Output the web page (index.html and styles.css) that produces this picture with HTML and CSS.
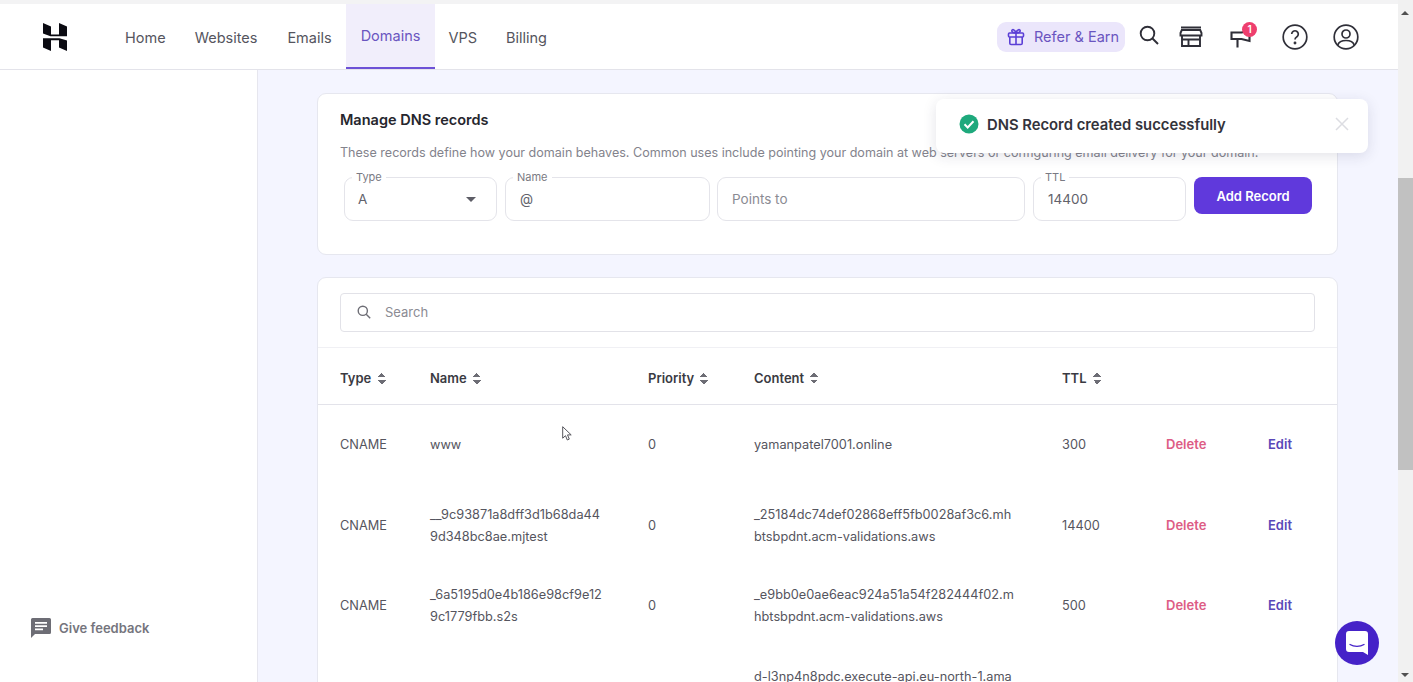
FILE: index.html
```html
<!DOCTYPE html>
<html>
    <head>
        <meta charset="utf-8">
        <title>Manage DNS records</title>
        <link rel="stylesheet" href="styles.css">
    </head>
    <body>
        <div class="app">
            <div class="top-strip"></div>
            <div class="header">
                <svg class="logo" viewBox="0 0 24 28" width="24" height="28">
                    <path d="M0 0l8 3.500v8h8V0l8 3.500v9.800H7.500L0 10.500z" fill="#0b0b12"/>
                    <path d="M0 15.200h16.500L24 17.500V28l-8-3.500v-7.300H8V28l-8-3.500z" fill="#0b0b12"/>
                </svg>
                <div class="nav">
                    <a class="home">Home</a>
                    <a class="websites">Websites</a>
                    <a>Emails</a>
                    <a class="active">Domains</a>
                    <a class="vps">VPS</a>
                    <a>Billing</a>
                </div>
                <div class="actions">
                    <div class="refer">
                        <svg viewBox="0 0 20 20" width="20" height="20" fill="none" stroke="#5b3fd6" stroke-width="1.6">
                            <rect x="2.500" y="6" width="15" height="4" rx="1"/>
                            <path d="M3.800 10v6.200a1.300 1.300 0 0 0 1.300 1.300h9.800a1.300 1.300 0 0 0 1.300-1.300V10M10 6v11.500M10 6C8 6 5.800 5.300 5.800 3.800 5.800 2 8.800 1.800 10 6zM10 6c2 0 4.200-.7 4.200-2.200C14.200 2 11.200 1.800 10 6z"/>
                        </svg>
                        <span>Refer &amp; Earn</span>
                    </div>
                    <svg class="ic-search" viewBox="0 0 20 20" width="20" height="20" fill="none" stroke="#2f2f38" stroke-width="1.9">
                        <circle cx="8.500" cy="8.500" r="6.800"/>
                        <path d="M13.500 13.500l5.500 5.500"/>
                    </svg>
                    <svg class="ic-store" viewBox="0 0 24 21" width="24" height="21" fill="none" stroke="#2f2f38" stroke-width="1.9">
                        <path d="M2 1.500h20M1.500 7l1.300-3h18.400l1.300 3v2.500h-21zM3 9.500V20h18V9.500M9.500 20v-6.500h-6.500M9.500 13.500h11.500"/>
                    </svg>
                    <div class="ic-news">
                        <svg viewBox="0 0 24 18" width="24" height="18" fill="none" stroke="#2f2f38" stroke-width="2.1">
                            <path d="M1.500 2.500h10l8-1.500v10l-8-2h-10zM7.500 9v8.500"/>
                        </svg>
                        <span class="badge">1</span>
                    </div>
                    <svg class="ic-help" viewBox="0 0 26 26" width="26" height="26" fill="none" stroke="#2f2f38" stroke-width="1.7">
                        <circle cx="13" cy="13" r="11.800"/>
                        <path d="M9.700 10a3.300 3.300 0 1 1 5 2.900c-1.100.7-1.700 1.300-1.700 2.600"/>
                        <circle cx="13" cy="19" r=".6" fill="#2f2f38"/>
                    </svg>
                    <svg class="ic-user" viewBox="0 0 26 26" width="26" height="26" fill="none" stroke="#2f2f38" stroke-width="1.7">
                        <circle cx="13" cy="13" r="11.800"/>
                        <circle cx="13" cy="10" r="4"/>
                        <path d="M4.800 21c1-3.200 4-4.500 8.200-4.500s7.200 1.300 8.200 4.500"/>
                    </svg>
                </div>
            </div>
            <div class="below">
                <div class="sidebar">
                    <div class="feedback">
                        <svg viewBox="0 0 20 20" width="20" height="20">
                            <path d="M1.500 0h17A1.500 1.500 0 0 1 20 1.500v13a1.500 1.500 0 0 1-1.500 1.500H4l-4 4V1.500A1.500 1.500 0 0 1 1.500 0z" fill="#6d6d75"/>
                            <path d="M4 4h12v1.800H4zM4 7.200h12V9H4zM4 10.400h8v1.800H4z" fill="#fff"/>
                        </svg>
                        <span>Give feedback</span>
                    </div>
                </div>
                <div class="main">
                    <div class="card card-dns">
                        <h2>Manage DNS records</h2>
                        <p>These records define how your domain behaves. Common uses include pointing your domain at web servers or configuring email delivery for your domain.</p>
                        <div class="form">
                            <div class="field f-type">
                                <label>Type</label>
                                <span class="val">A</span>
                                <span class="caret"></span>
                            </div>
                            <div class="field f-name">
                                <label>Name</label>
                                <span class="val">@</span>
                            </div>
                            <div class="field f-points">
                                <span class="ph">Points to</span>
                            </div>
                            <div class="field f-ttl">
                                <label>TTL</label>
                                <span class="val">14400</span>
                            </div>
                            <button class="add-btn">Add Record</button>
                        </div>
                    </div>
                    <div class="card card-table">
                        <div class="search-wrap">
                            <div class="search">
                                <svg viewBox="0 0 14 14" width="14" height="14" fill="none" stroke="#6d6d75" stroke-width="1.4">
                                    <circle cx="5.800" cy="5.800" r="4.600"/>
                                    <path d="M9.200 9.200l4 4"/>
                                </svg>
                                <span>Search</span>
                            </div>
                        </div>
                        <table>
                            <colgroup>
                                <col class="c1"><col class="c2"><col class="c3"><col class="c4"><col class="c5"><col class="c6"><col>
                            </colgroup>
                            <thead>
                                <tr>
                                    <th>Type <i class="sort"></i></th>
                                    <th>Name <i class="sort"></i></th>
                                    <th>Priority <i class="sort"></i></th>
                                    <th>Content <i class="sort"></i></th>
                                    <th>TTL <i class="sort"></i></th>
                                    <th></th>
                                    <th></th>
                                </tr>
                            </thead>
                            <tbody>
                                <tr class="r1">
                                    <td>CNAME</td>
                                    <td>www</td>
                                    <td>0</td>
                                    <td>yamanpatel7001.online</td>
                                    <td>300</td>
                                    <td class="del">Delete</td>
                                    <td class="edit">Edit</td>
                                </tr>
                                <tr>
                                    <td>CNAME</td>
                                    <td>__9c93871a8dff3d1b68da44<br>9d348bc8ae.mjtest</td>
                                    <td>0</td>
                                    <td>_25184dc74def02868eff5fb0028af3c6.mh<br>btsbpdnt.acm-validations.aws</td>
                                    <td>14400</td>
                                    <td class="del">Delete</td>
                                    <td class="edit">Edit</td>
                                </tr>
                                <tr>
                                    <td>CNAME</td>
                                    <td>_6a5195d0e4b186e98cf9e12<br>9c1779fbb.s2s</td>
                                    <td>0</td>
                                    <td>_e9bb0e0ae6eac924a51a54f282444f02.m<br>hbtsbpdnt.acm-validations.aws</td>
                                    <td>500</td>
                                    <td class="del">Delete</td>
                                    <td class="edit">Edit</td>
                                </tr>
                                <tr class="r4">
                                    <td></td>
                                    <td></td>
                                    <td></td>
                                    <td>d-l3np4n8pdc.execute-api.eu-north-1.ama</td>
                                    <td></td>
                                    <td></td>
                                    <td></td>
                                </tr>
                            </tbody>
                        </table>
                    </div>
                </div>
            </div>
        </div>
        <div class="scrollbar">
            <span class="arrow-up"></span>
            <div class="thumb"></div>
            <span class="arrow-down"></span>
        </div>

        <div class="toast">
            <svg viewBox="0 0 20 20" width="20" height="20">
                <circle cx="10" cy="10" r="9.500" fill="#1ea97c"/>
                <path d="M5.500 10.300l3.200 3.200 5.800-6.200" fill="none" stroke="#fff" stroke-width="2"/>
            </svg>
            <span class="toast-text">DNS Record created successfully</span>
            <svg class="toast-x" viewBox="0 0 14 14" width="14" height="14" fill="none" stroke="#dcdde2" stroke-width="1.5">
                <path d="M1 1l12 12M13 1L1 13"/>
            </svg>
        </div>

        <div class="chat">
            <svg viewBox="0 0 22 24" width="22" height="24">
                <path d="M3 0h16a3 3 0 0 1 3 3v21l-5-3H3a3 3 0 0 1-3-3V3a3 3 0 0 1 3-3z" fill="#fff"/>
                <path d="M4 13.500c4 2.500 10 2.500 14 0" fill="none" stroke="#4522c8" stroke-width="1.4" stroke-linecap="round"/>
            </svg>
        </div>

        <svg class="cursor" viewBox="0 0 10 15" width="10" height="15">
            <path d="M.7.7v11.500l2.800-2.500 1.800 4.300 2-.9-1.800-4.200h3.700z" fill="#fff" stroke="#55555c" stroke-width="1"/>
        </svg>
    </body>
</html>
```

FILE: styles.css
```css
html, body {
    margin: 0;
    padding: 0;
    height: 682px;
    overflow: hidden;
}
body {
    display: flex;
    font-family: "Inter", "Liberation Sans", sans-serif;
    color: #4b4b55;
    background: #f4f5ff;
}
.app {
    flex: 1;
    min-width: 0;
    display: flex;
    flex-direction: column;
}
.top-strip {
    height: 4px;
    background: #f3f3f4;
}

/* header */
.header {
    height: 65px;
    flex: none;
    display: flex;
    align-items: center;
    background: #fff;
    box-shadow: 0 1px 0 #e3e3ea;
    position: relative;
    z-index: 1;
}
.logo {
    margin-left: 43px;
    flex: none;
}
.nav {
    display: flex;
    align-items: stretch;
    align-self: stretch;
    margin-left: 39px;
}
.nav a {
    display: flex;
    align-items: center;
    padding: 1px 14.5px 0;
    font-size: 14.5px;
    color: #55555e;
}
.nav a.home {
    padding-left: 19px;
}
.nav a.websites {
    padding-right: 15.5px;
}
.nav a.vps {
    padding-left: 13.5px;
}
.nav a.active {
    color: #6a55c0;
    background: #f1eefb;
    border-bottom: 2px solid #6d51d6;
    box-sizing: border-box;
    padding-top: 0;
    padding-bottom: 1px;
}
.actions {
    margin-left: auto;
    display: flex;
    align-items: center;
    margin-right: 39px;
}
.refer {
    display: flex;
    align-items: center;
    gap: 8px;
    height: 30px;
    width: 128px;
    box-sizing: border-box;
    padding-left: 9px;
    background: #ebe6fb;
    border-radius: 9px;
    color: #6a55c0;
    font-size: 14.5px;
}
.ic-search {
    margin-left: 14px;
    margin-top: -3px;
}
.ic-store {
    margin-left: 20px;
}
.ic-news {
    margin-left: 27px;
    margin-top: 4px;
    position: relative;
    display: flex;
}
.badge {
    position: absolute;
    top: -8px;
    left: 12px;
    width: 15px;
    height: 15px;
    border-radius: 50%;
    background: #ee3f6e;
    color: #fff;
    font-size: 10px;
    font-weight: 600;
    line-height: 15px;
    text-align: center;
}
.ic-help {
    margin-left: 28px;
}
.ic-user {
    margin-left: 25px;
}

/* below header */
.below {
    flex: 1;
    min-height: 0;
    display: flex;
}
.sidebar {
    width: 258px;
    flex: none;
    box-sizing: border-box;
    background: #fff;
    border-right: 1px solid #e6e6ee;
    display: flex;
    flex-direction: column;
    justify-content: flex-end;
    padding: 0 0 44px 31px;
}
.feedback {
    display: flex;
    align-items: center;
    gap: 8px;
    font-size: 13px;
    font-weight: 600;
    color: #75757d;
}
.main {
    flex: 1;
    min-width: 0;
    padding: 24px 60px 0 59px;
    overflow: hidden;
}
.card {
    background: #fff;
    border: 1px solid #e6e7ef;
    border-radius: 9px;
    box-sizing: border-box;
}

/* dns form */
.card-dns {
    height: 162px;
    padding: 16px 22px 0;
}
.card-dns h2 {
    margin: 0;
    font-size: 14.5px;
    line-height: 20px;
    font-weight: 600;
    color: #26262e;
}
.card-dns p {
    margin: 14px 0 0;
    font-size: 12.55px;
    line-height: 18px;
    color: #83838c;
    white-space: nowrap;
}
.form {
    display: flex;
    align-items: flex-start;
    gap: 7px;
    margin: 15px 0 0 4px;
}
.field {
    height: 44px;
    box-sizing: border-box;
    border: 1px solid #e4e4ea;
    border-radius: 9px;
    position: relative;
    display: flex;
    align-items: center;
    padding-left: 14px;
    font-size: 13.5px;
    flex: none;
}
.field label {
    position: absolute;
    top: -8px;
    left: 7px;
    padding: 0 4px;
    background: #fff;
    font-size: 11px;
    line-height: 14px;
    color: #7a7a83;
}
.field .val {
    color: #62626b;
}
.field .ph {
    color: #8b8b93;
}
.f-type { width: 153px; padding-left: 13px; }
.f-name { width: 205px; margin-left: 1px; }
.f-points { width: 308px; }
.f-ttl { width: 153px; margin-left: 1px; }
.caret {
    position: absolute;
    right: 20px;
    top: 19px;
    border-left: 5px solid transparent;
    border-right: 5px solid transparent;
    border-top: 5px solid #5d5d66;
}
.add-btn {
    width: 118px;
    height: 37px;
    margin-left: 1px;
    border: 0;
    border-radius: 8px;
    background: #6039dc;
    color: #fff;
    font-family: inherit;
    font-size: 13px;
    font-weight: 600;
}

/* records table */
.card-table {
    margin-top: 22px;
}
.search-wrap {
    height: 70px;
    box-sizing: border-box;
    padding: 15px 22px 0;
    border-bottom: 1px solid #f0f0f4;
}
.search {
    height: 39px;
    box-sizing: border-box;
    border: 1px solid #e2e2e8;
    border-radius: 4px;
    display: flex;
    align-items: center;
    padding: 0 0 1px 16px;
    gap: 14px;
    font-size: 13px;
    color: #8b8b93;
}
table {
    width: 100%;
    table-layout: fixed;
    border-collapse: collapse;
}
.c1 { width: 112px; }
.c2 { width: 218px; }
.c3 { width: 106px; }
.c4 { width: 308px; }
.c5 { width: 104px; }
.c6 { width: 102px; }
th {
    height: 56px;
    box-sizing: border-box;
    padding: 4px 0 0;
    text-align: left;
    font-size: 13px;
    font-weight: 600;
    color: #3a3a42;
    border-bottom: 1px solid #e3e3ea;
}
td {
    padding: 20px 0 16px;
    font-size: 12.75px;
    line-height: 22px;
    color: #55555e;
    white-space: nowrap;
}
th:first-child, td:first-child {
    padding-left: 22px;
}
.r1 td {
    height: 80px;
    box-sizing: border-box;
    padding: 20px 0 18px;
}
.r1 td:first-child {
    padding-left: 22px;
}
.r4 td {
    padding-top: 22px;
}
td.del {
    padding: 19px 0 17px;
    color: #dd5c85;
    font-size: 13px;
    font-weight: 600;
}
td.edit {
    padding: 19px 0 17px;
    color: #5a48b8;
    font-size: 13px;
    font-weight: 600;
}
.r1 td.del, .r1 td.edit {
    padding: 18px 0;
}
.sort {
    display: inline-block;
    width: 8px;
    height: 11px;
    margin-left: 3px;
    vertical-align: -1px;
    background:
        linear-gradient(to bottom right, transparent 50%, #6d6d75 50%) 0 0 / 4px 4px no-repeat,
        linear-gradient(to bottom left, transparent 50%, #6d6d75 50%) 4px 0 / 4px 4px no-repeat,
        linear-gradient(to top right, transparent 50%, #6d6d75 50%) 0 7px / 4px 4px no-repeat,
        linear-gradient(to top left, transparent 50%, #6d6d75 50%) 4px 7px / 4px 4px no-repeat;
}

/* scrollbar */
.scrollbar {
    width: 15px;
    flex: none;
    background: #f1f1f1;
    position: relative;
}
.thumb {
    position: absolute;
    top: 178px;
    left: 0;
    right: 0;
    height: 292px;
    background: #c1c1c1;
}
.arrow-up, .arrow-down {
    position: absolute;
    left: 3px;
    border-left: 4px solid transparent;
    border-right: 4px solid transparent;
}
.arrow-up {
    top: 11px;
    border-bottom: 4px solid #505050;
}
.arrow-down {
    bottom: 5px;
    border-top: 4px solid #505050;
}

/* overlays */
.toast {
    position: absolute;
    left: 936px;
    top: 99px;
    width: 432px;
    height: 54px;
    box-sizing: border-box;
    padding: 0 0 4px 23px;
    display: flex;
    align-items: center;
    gap: 8px;
    background: #fff;
    border-radius: 8px;
    box-shadow: 0 3px 14px rgba(40, 40, 80, 0.13);
}
.toast-text {
    padding-top: 2px;
    font-size: 14.8px;
    font-weight: 600;
    color: #33333b;
}
.toast-x {
    position: absolute;
    right: 19px;
    top: 18px;
}
.chat {
    position: absolute;
    left: 1335px;
    top: 621px;
    width: 44px;
    height: 44px;
    border-radius: 50%;
    background: #4522c8;
    display: flex;
    align-items: center;
    justify-content: center;
}
.cursor {
    position: absolute;
    left: 562px;
    top: 426px;
}
```
